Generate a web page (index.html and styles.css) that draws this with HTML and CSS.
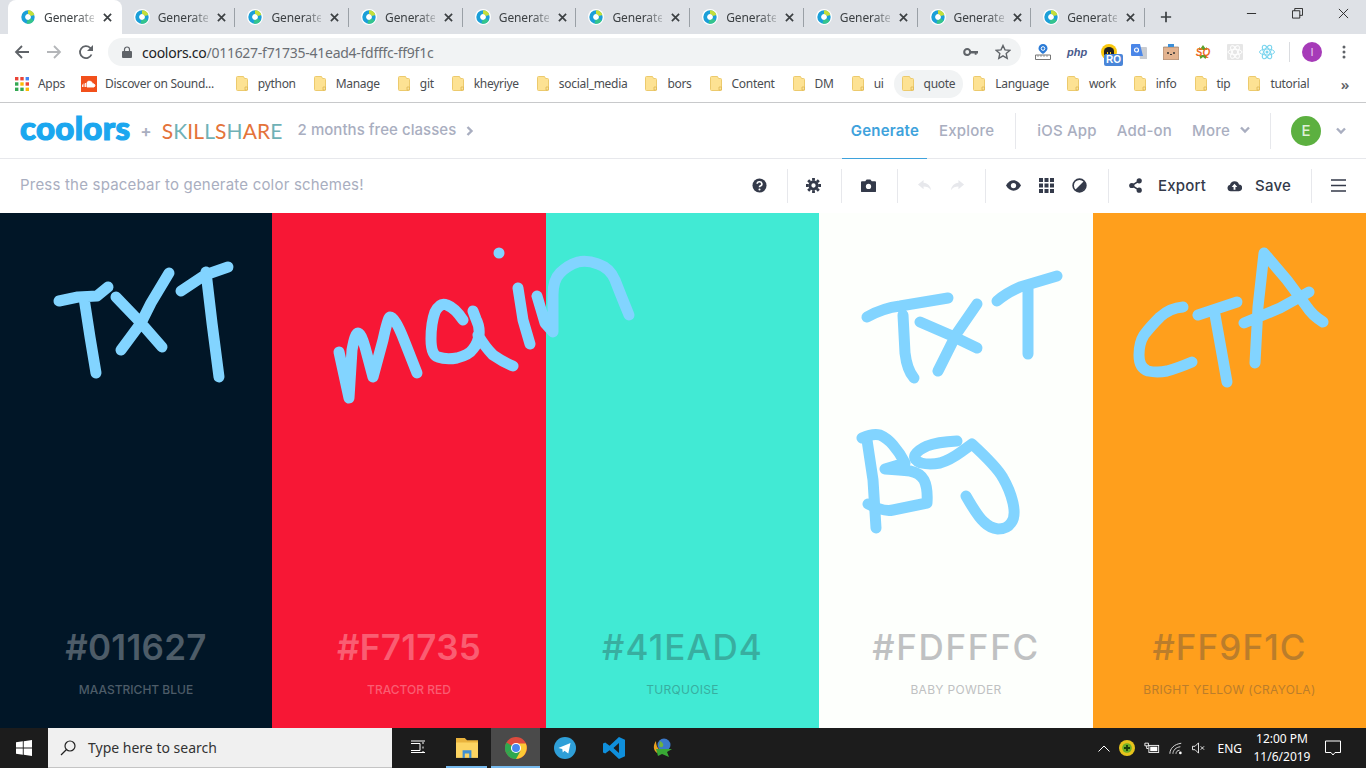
FILE: index.html
```html
<!DOCTYPE html>
<html lang="en">
<head>
  <meta charset="UTF-8" />
  <title>Coolors</title>
  <link rel="stylesheet" href="styles.css">
</head>
<body>
  <svg class="defs" width="0" height="0">
    <symbol id="fav" viewBox="0 0 16 16">
      <circle cx="8" cy="8" r="8" fill="#fff"/>
      <circle cx="8" cy="8" r="4.800" fill="none" stroke="#1b9fd8" stroke-width="3.800"/>
      <path d="M8 3.200a4.800 4.800 0 0 1 4.600 3.300" fill="none" stroke="#c4de3a" stroke-width="3.800"/>
      <path d="M12.200 10.500A4.800 4.800 0 0 1 7 12.700" fill="none" stroke="#35c48d" stroke-width="3.800"/>
    </symbol>
    <symbol id="x" viewBox="0 0 10 10">
      <path d="M1 1l8 8M9 1l-8 8" stroke="#3c4043" stroke-width="1.900" fill="none"/>
    </symbol>
    <symbol id="folder" viewBox="0 0 12 15">
      <path d="M.5 1.500a1 1 0 0 1 1-1h6l1 2h2a1 1 0 0 1 1 1v10a1 1 0 0 1-1 1h-9a1 1 0 0 1-1-1z" fill="#fde293" stroke="#ecca6d"/>
      <path d="M9 14v-3h2.500v3z" fill="#fbe39b" stroke="#e0b850" stroke-width=".8"/>
    </symbol>
    <symbol id="chev" viewBox="0 0 10 8">
      <path d="M1 1.500l4 4 4-4" fill="none" stroke="#a9aec0" stroke-width="2.400"/>
    </symbol>
  </svg>

  <div class="tabstrip">
    <div class="tab tab-active"><svg class="fav"><use href="#fav"/></svg><span class="tab-title">Generate</span><svg class="tab-x"><use href="#x"/></svg></div>
    <div class="tab"><svg class="fav"><use href="#fav"/></svg><span class="tab-title">Generate</span><svg class="tab-x"><use href="#x"/></svg></div>
    <div class="tab"><svg class="fav"><use href="#fav"/></svg><span class="tab-title">Generate</span><svg class="tab-x"><use href="#x"/></svg></div>
    <div class="tab"><svg class="fav"><use href="#fav"/></svg><span class="tab-title">Generate</span><svg class="tab-x"><use href="#x"/></svg></div>
    <div class="tab"><svg class="fav"><use href="#fav"/></svg><span class="tab-title">Generate</span><svg class="tab-x"><use href="#x"/></svg></div>
    <div class="tab"><svg class="fav"><use href="#fav"/></svg><span class="tab-title">Generate</span><svg class="tab-x"><use href="#x"/></svg></div>
    <div class="tab"><svg class="fav"><use href="#fav"/></svg><span class="tab-title">Generate</span><svg class="tab-x"><use href="#x"/></svg></div>
    <div class="tab"><svg class="fav"><use href="#fav"/></svg><span class="tab-title">Generate</span><svg class="tab-x"><use href="#x"/></svg></div>
    <div class="tab"><svg class="fav"><use href="#fav"/></svg><span class="tab-title">Generate</span><svg class="tab-x"><use href="#x"/></svg></div>
    <div class="tab"><svg class="fav"><use href="#fav"/></svg><span class="tab-title">Generate</span><svg class="tab-x"><use href="#x"/></svg></div>
    <svg class="newtab" viewBox="0 0 14 14"><path d="M7 1v12M1 7h12" stroke="#3c4043" stroke-width="2" fill="none"/></svg>
    <div class="winctrls">
      <div class="winbtn"><svg viewBox="0 0 12 12"><path d="M1 6h10" stroke="#222" fill="none"/></svg></div>
      <div class="winbtn"><svg viewBox="0 0 12 12"><path d="M.5 3h8v8h-8zM3 3V.5h8.500V8H8.500" stroke="#222" fill="none"/></svg></div>
      <div class="winbtn"><svg viewBox="0 0 12 12"><path d="M1 1l10 10M11 1L1 11" stroke="#222" fill="none"/></svg></div>
    </div>
  </div>

  <div class="urlbar">
    <div class="navbtns">
      <svg viewBox="0 0 16 16"><path d="M15 8H2M8 2L2 8l6 6" fill="none" stroke="#5f6368" stroke-width="1.800"/></svg>
      <svg viewBox="0 0 16 16"><path d="M1 8h13M8 2l6 6-6 6" fill="none" stroke="#b4b6b9" stroke-width="1.800"/></svg>
      <svg viewBox="0 0 16 16"><path d="M13.500 10.500A6 6 0 1 1 12.200 3.800L14 5.500" fill="none" stroke="#5f6368" stroke-width="1.800"/><path d="M15 1v6H9z" fill="#5f6368"/></svg>
    </div>
    <div class="omnibox">
      <svg class="lock" viewBox="0 0 10 12"><path d="M2.500 5V3.500a2.500 2.500 0 0 1 5 0V5" fill="none" stroke="#5f6368" stroke-width="1.200"/><rect y="5" width="10" height="7" rx="1" fill="#5f6368"/></svg>
      <span class="url"><b>coolors.co</b>/011627-f71735-41ead4-fdfffc-ff9f1c</span>
      <svg class="omni-key" viewBox="0 0 16 10"><circle cx="4.500" cy="5" r="3.200" fill="none" stroke="#5f6368" stroke-width="2.200"/><path d="M8 4h8v2.500h-1.500V8h-2V6.500H8z" fill="#5f6368"/></svg>
      <svg class="omni-star" viewBox="0 0 16 16"><path d="M8 1.500l2 4.400 4.800.5-3.600 3.200 1 4.700L8 11.900l-4.200 2.400 1-4.700L1.200 6.400 6 5.900z" fill="none" stroke="#5f6368" stroke-width="1.400"/></svg>
    </div>
    <div class="exts">
      <svg viewBox="0 0 16 16"><path d="M8 0a4.500 4.500 0 0 1 4.500 4.500C12.500 7 8 10 8 10S3.500 7 3.500 4.500A4.500 4.500 0 0 1 8 0z" fill="#2b7bd6"/><circle cx="8" cy="4.500" r="1.800" fill="none" stroke="#fff"/><path d="M.5 11h15v4.500H.5z" fill="#fff" stroke="#777"/><path d="M3 11v2M6 11v2M9 11v2M12 11v2" stroke="#777" stroke-width=".7"/></svg>
      <span class="ext-php">php</span>
      <div class="ext-ro">
        <svg viewBox="0 0 16 16"><circle cx="8" cy="8" r="8" fill="#f9c80e"/><path d="M3 11V7a5 4 0 0 1 10 0v4z" fill="#222"/><path d="M6 8h1v3H6zM9 8h1v3H9z" fill="#f9c80e"/></svg>
        <span class="ro-badge">RO</span>
      </div>
      <svg viewBox="0 0 16 16"><path d="M7 3h8a1 1 0 0 1 1 1v11H9z" fill="#c9ccd1"/><path d="M1 0h8l3 12H1a1 1 0 0 1-1-1V1a1 1 0 0 1 1-1z" fill="#4a86e8"/><circle cx="5.500" cy="6" r="2" fill="none" stroke="#fff" stroke-width="1.200"/></svg>
      <svg viewBox="0 0 16 16"><rect y="3" width="16" height="13" rx="1" fill="#e3b38f" stroke="#7a6a5c" stroke-width=".6"/><path d="M5 0h6v3H5z" fill="#3c8fd8"/><circle cx="5" cy="9" r="1" fill="#333"/><circle cx="11" cy="9" r="1" fill="#333"/><path d="M7 10h2v1H7z" fill="#333"/></svg>
      <svg viewBox="0 0 16 16"><path d="M4 3l1.500 1.500L8 1l2.500 3.500L12 3v3H4zM4 11h8l-1.500 4L8 13l-2.500 2z" fill="#5aa02c"/><text x="8" y="12" class="sq-text">SQ</text></svg>
      <svg viewBox="0 0 16 16"><rect width="16" height="16" rx="1" fill="#e6e6e6"/><g fill="none" stroke="#fff"><ellipse cx="8" cy="8" rx="7" ry="2.700"/><ellipse cx="8" cy="8" rx="7" ry="2.700" transform="rotate(60 8 8)"/><ellipse cx="8" cy="8" rx="7" ry="2.700" transform="rotate(120 8 8)"/></g></svg>
      <svg viewBox="0 0 16 16"><g fill="none" stroke="#7cd5ee"><ellipse cx="8" cy="8" rx="7.500" ry="3"/><ellipse cx="8" cy="8" rx="7.500" ry="3" transform="rotate(60 8 8)"/><ellipse cx="8" cy="8" rx="7.500" ry="3" transform="rotate(120 8 8)"/></g><circle cx="8" cy="8" r="1.500" fill="#7cd5ee"/></svg>
    </div>
    <div class="profile">
      <span class="profile-pic">I</span>
      <svg class="kebab" viewBox="0 0 4 14"><circle cx="2" cy="2" r="1.500" fill="#5f6368"/><circle cx="2" cy="7" r="1.500" fill="#5f6368"/><circle cx="2" cy="12" r="1.500" fill="#5f6368"/></svg>
    </div>
  </div>

  <div class="bookmarks">
    <div class="bm bm-apps">
      <svg class="apps-ico" viewBox="0 0 14 14">
        <g fill="#ea4335"><rect width="3.400" height="3.400"/><rect x="5.300" width="3.400" height="3.400"/></g><rect x="10.600" width="3.400" height="3.400" fill="#4285f4"/>
        <rect y="5.300" width="3.400" height="3.400" fill="#34a853"/><rect x="5.300" y="5.300" width="3.400" height="3.400" fill="#fbbc05"/><rect x="10.600" y="5.300" width="3.400" height="3.400" fill="#ea4335"/>
        <rect y="10.600" width="3.400" height="3.400" fill="#34a853"/><rect x="5.300" y="10.600" width="3.400" height="3.400" fill="#34a853"/><rect x="10.600" y="10.600" width="3.400" height="3.400" fill="#fbbc05"/>
      </svg>Apps
    </div>
    <div class="bm bm-sc">
      <svg class="sc-ico" viewBox="0 0 16 16"><rect width="16" height="16" fill="#f2501b"/><path d="M6 11V6.500A3 3 0 0 1 11.500 8 1.600 1.600 0 1 1 13 11zM1.500 11V8.500M3 11V7.500M4.500 11V7" stroke="#fff" stroke-width=".9" fill="#fff"/></svg>Discover on Sound...
    </div>
    <div class="bm"><svg class="folder"><use href="#folder"/></svg>python</div>
    <div class="bm"><svg class="folder"><use href="#folder"/></svg>Manage</div>
    <div class="bm"><svg class="folder"><use href="#folder"/></svg>git</div>
    <div class="bm"><svg class="folder"><use href="#folder"/></svg>kheyriye</div>
    <div class="bm"><svg class="folder"><use href="#folder"/></svg>social_media</div>
    <div class="bm"><svg class="folder"><use href="#folder"/></svg>bors</div>
    <div class="bm"><svg class="folder"><use href="#folder"/></svg>Content</div>
    <div class="bm"><svg class="folder"><use href="#folder"/></svg>DM</div>
    <div class="bm"><svg class="folder"><use href="#folder"/></svg>ui</div>
    <div class="bm bm-hover"><svg class="folder"><use href="#folder"/></svg>quote</div>
    <div class="bm"><svg class="folder"><use href="#folder"/></svg>Language</div>
    <div class="bm"><svg class="folder"><use href="#folder"/></svg>work</div>
    <div class="bm"><svg class="folder"><use href="#folder"/></svg>info</div>
    <div class="bm"><svg class="folder"><use href="#folder"/></svg>tip</div>
    <div class="bm"><svg class="folder"><use href="#folder"/></svg>tutorial</div>
    <span class="bm-more">»</span>
  </div>

  <header class="sitenav">
    <span class="logo">coolors</span>
    <span class="logo-plus">+</span>
    <span class="skillshare"><i class="or">S</i><i class="te">K</i><i class="or">I</i><i class="or">L</i><i class="te">L</i><i class="or">S</i><i class="te">H</i><i class="or">A</i><i class="or">R</i><i class="te">E</i></span>
    <span class="promo">2 months free classes</span>
    <svg class="promo-arrow" viewBox="0 0 8 10"><path d="M1.500 1l4 4-4 4" fill="none" stroke="#a9aec0" stroke-width="2.400"/></svg>
    <nav class="links">
      <a class="link link-active">Generate</a>
      <a class="link">Explore</a>
      <span class="navsep"></span>
      <a class="link">iOS App</a>
      <a class="link">Add-on</a>
      <a class="link">More<svg class="chev"><use href="#chev"/></svg></a>
      <span class="navsep navsep-b"></span>
      <span class="avatar">E</span>
      <svg class="chev chev-user"><use href="#chev"/></svg>
    </nav>
  </header>

  <div class="toolbar">
    <span class="hint">Press the spacebar to generate color schemes!</span>
    <div class="tools">
      <div class="tg tg-help">
        <svg class="ti" viewBox="0 0 16 16"><circle cx="8" cy="8" r="7.500" fill="#343a4a"/><path d="M5.500 6.200A2.500 2.300 0 1 1 8.800 8.500c-.7.300-.8.700-.8 1.300" fill="none" stroke="#fff" stroke-width="1.800"/><circle cx="8" cy="12.200" r="1.100" fill="#fff"/></svg>
      </div>
      <div class="tg tg-gear">
        <svg class="ti" viewBox="0 0 16 16"><circle cx="8" cy="8" r="3.800" fill="none" stroke="#343a4a" stroke-width="3"/><path d="M6.500 0h3v3h-3zM6.500 13h3v3h-3zM0 6.500h3v3H0zM13 6.500h3v3h-3z" fill="#343a4a"/><path d="M6.500 0h3v3h-3zM6.500 13h3v3h-3zM0 6.500h3v3H0zM13 6.500h3v3h-3z" fill="#343a4a" transform="rotate(45 8 8)"/></svg>
      </div>
      <div class="tg tg-cam">
        <svg class="ti" viewBox="0 0 16 16"><path d="M1 3.500h3.500L6 1.500h4l1.500 2H15a1 1 0 0 1 1 1V14a1 1 0 0 1-1 1H1a1 1 0 0 1-1-1V4.500a1 1 0 0 1 1-1z" fill="#343a4a"/><circle cx="8" cy="9" r="2.800" fill="#fff"/></svg>
      </div>
      <div class="tg tg-hist">
        <svg class="ti" viewBox="0 0 16 14"><path d="M7 1L1 6l6 5V8c3.500 0 6 1 8 4-.5-4.500-3.500-7.500-8-8z" fill="#e7e8ec"/></svg>
        <svg class="ti" viewBox="0 0 16 14"><path d="M9 1l6 5-6 5V8c-3.500 0-6 1-8 4 .5-4.500 3.500-7.500 8-8z" fill="#e7e8ec"/></svg>
      </div>
      <div class="tg tg-view">
        <svg class="ti" viewBox="0 0 16 12"><path d="M0 6c2-3.500 5-5.500 8-5.500S14 2.500 16 6c-2 3.500-5 5.500-8 5.500S2 9.500 0 6z" fill="#343a4a"/><circle cx="8" cy="6" r="2.800" fill="#fff"/></svg>
        <svg class="ti" viewBox="0 0 15 15"><g fill="#343a4a"><rect width="4" height="4"/><rect x="5.500" width="4" height="4"/><rect x="11" width="4" height="4"/><rect y="5.500" width="4" height="4"/><rect x="5.500" y="5.500" width="4" height="4"/><rect x="11" y="5.500" width="4" height="4"/><rect y="11" width="4" height="4"/><rect x="5.500" y="11" width="4" height="4"/><rect x="11" y="11" width="4" height="4"/></g></svg>
        <svg class="ti" viewBox="0 0 16 16"><circle cx="8" cy="8" r="6.800" fill="#fff" stroke="#343a4a" stroke-width="1.800"/><path d="M12.800 3.200A6.800 6.800 0 0 1 3.200 12.800z" fill="#343a4a"/></svg>
      </div>
      <div class="tg tg-act">
        <svg class="ti ti-share" viewBox="0 0 14 16"><circle cx="3" cy="8" r="2.800" fill="#343a4a"/><circle cx="11" cy="3" r="2.800" fill="#343a4a"/><circle cx="11" cy="13" r="2.800" fill="#343a4a"/><path d="M3 8l8-5M3 8l8 5" stroke="#343a4a" stroke-width="1.600"/></svg>
        <span class="act-label">Export</span>
        <svg class="ti ti-cloud" viewBox="0 0 16 13"><path d="M4 12.500a3.500 3.500 0 0 1-.8-6.900A5 5 0 0 1 12.800 5.500 3.500 3.500 0 0 1 12.500 12.500z" fill="#343a4a"/><path d="M8 4.500L5 8h2v3h2V8h2z" fill="#fff"/></svg>
        <span class="act-label">Save</span>
      </div>
      <div class="tg tg-menu">
        <svg class="ti ti-burger" viewBox="0 0 15 13"><path d="M0 1h15M0 6.500h15M0 12h15" stroke="#343a4a" stroke-width="1.500"/></svg>
      </div>
    </div>
  </div>

  <main class="palette">
    <div class="swatch sw-dark"><div class="hex">#011627</div><div class="cname">Maastricht Blue</div></div>
    <div class="swatch sw-red"><div class="hex">#F71735</div><div class="cname">Tractor Red</div></div>
    <div class="swatch sw-teal"><div class="hex">#41EAD4</div><div class="cname">Turquoise</div></div>
    <div class="swatch sw-white"><div class="hex">#FDFFFC</div><div class="cname">Baby Powder</div></div>
    <div class="swatch sw-orange"><div class="hex">#FF9F1C</div><div class="cname">Bright Yellow (Crayola)</div></div>

    <!-- hand drawn notes on top of the colours, coordinates are page pixels -->
    <svg class="scribbles" viewBox="0 213 1366 515">
      <!-- TXT -->
      <path d="M59 301L78 297L97 296L108 287M84 298L90 337L96 373"/>
      <path d="M116 297L141 323L162 347M169 273L151 303L141 323L121 350"/>
      <path d="M181 291L205 275L228 267M206 272L212 323L219 377"/>
      <!-- main -->
      <path d="M339 352L349 398L352 350Q355 333 358 333Q361 333 365 347L373 377L383 340Q388 317 390 317Q395 317 404 340L417 373"/>
      <path d="M463 320Q455 308 447 305Q440 302 435 312Q431 323 431 339Q431 355 438 357Q446 360 457 358Q469 355 473 349Q478 343 479 335Q480 327 476 319L473 311M478 335Q485 347 493 355Q503 362 513 366"/>
      <path d="M499 253v.1M518 288L523 320L530 344"/>
      <path d="M537 296L545 323L553 332L553 295Q553 280 560 273Q568 265 578 262Q587 260 598 264Q610 268 615 280Q620 293 629 315"/>
      <!-- TXT -->
      <path d="M867 317Q883 308 900 306L948 298M903 315L905 353Q907 370 914 378"/>
      <path d="M920 322L950 335L977 348M977 304L957 333L938 371"/>
      <path d="M997 301Q1006 293 1020 287L1057 276M1028 287L1028 354"/>
      <!-- BG -->
      <path d="M867 440L873 480L876 528"/>
      <path d="M862 438Q873 433 880 435Q887 438 893 445Q900 453 905 463L885 469Q900 470 910 471Q920 473 924 480Q928 488 927 503Q903 508 893 510Q883 512 868 504"/>
      <path d="M957 441Q937 442 927 446Q918 450 915 455Q913 460 921 463Q930 465 940 463Q950 460 961 452L972 444Q997 467 1003 478Q1010 490 1013 503Q1016 517 1011 523Q1007 529 998 529Q990 528 984 522Q978 517 966 496"/>
      <!-- CTA -->
      <path d="M1183 307Q1170 308 1160 317Q1150 327 1144 335Q1139 343 1139 355Q1139 368 1148 371Q1157 373 1167 371Q1178 368 1192 362"/>
      <path d="M1198 315L1237 302M1215 315L1227 382"/>
      <path d="M1255 363L1258 307L1264 253L1287 280L1307 307Q1312 315 1323 322M1244 323L1280 308L1309 292"/>
    </svg>
  </main>

  <footer class="taskbar">
    <svg class="tb-win" viewBox="0 0 16 16"><path d="M0 2.300l6.800-1v6.300H0zM7.700 1.200L16 0v7.600H7.700zM0 8.500h6.800v6.200l-6.800-1zM7.700 8.500H16V16l-8.300-1.200z" fill="#fff"/></svg>
    <div class="tb-search">
      <svg viewBox="0 0 16 16"><circle cx="10" cy="6" r="5" fill="none" stroke="#222" stroke-width="1.200"/><path d="M6.500 9.500L1 15" stroke="#222" stroke-width="1.300"/></svg>
      <span>Type here to search</span>
    </div>
    <div class="tb-apps">
      <div class="tb-app"><svg viewBox="0 0 16 16"><path d="M1 1h14M1 12.500h14M1 3.500h9v7H1M13 2v2M13 6.500v2M13 11v2" fill="none" stroke="#fff"/></svg></div>
      <div class="tb-app tb-open"><svg class="big" viewBox="0 0 20 20"><path d="M0 1h8l2 2h10v4H0z" fill="#e9b33d"/><path d="M0 5h20v14H0z" fill="#fcd462"/><path d="M6 12h8v7h-2v-4H8v4H6z" fill="#3f8fd2"/></svg></div>
      <div class="tb-app tb-cur"><svg class="big" viewBox="0 0 20 20"><circle cx="10" cy="10" r="10" fill="#dd4b3e"/><path d="M10 10L1.300 15A10 10 0 0 1 1.300 5z" fill="#2fa84f"/><path d="M1.300 15A10 10 0 0 0 11 20L15 10H10z" fill="#2fa84f"/><path d="M10 6h8.900A10 10 0 0 1 10 20l4-7z" fill="#fcc934"/><circle cx="10" cy="10" r="4.600" fill="#fff"/><circle cx="10" cy="10" r="3.600" fill="#4688f1"/></svg></div>
      <div class="tb-app"><svg class="big" viewBox="0 0 20 20"><circle cx="10" cy="10" r="10" fill="#2f9fd8"/><path d="M4 10l11-4.500L13 15l-3.500-2.500L8 14l-.5-3z" fill="#fff"/></svg></div>
      <div class="tb-app"><svg class="big" viewBox="0 0 20 20"><path d="M14.500 0L20 2.500v15L14.500 20 6 12 2 15 0 14V6l2-1 4 3zM14.500 5.500L9.500 10l5 4.500z" fill="#0f8fdc"/></svg></div>
      <div class="tb-app"><svg class="big" viewBox="0 0 22 20"><circle cx="12" cy="7" r="6.500" fill="#3b79c9"/><path d="M8 3c2 1 4 3 3 5s-3 1-4 0z" fill="#6fb33d"/><path d="M4 3C1 7 1 12 5 15l3-3C5 10 4 7 4 3z" fill="#e8a220"/><path d="M4 11l16 0-5 3 2 5-7-3-4 2z" fill="#39a935"/></svg></div>
    </div>
    <div class="tray">
      <svg class="tr-up" viewBox="0 0 12 7"><path d="M.500 6.500L6 1l5.500 5.500" fill="none" stroke="#fff"/></svg>
      <svg class="tr-green" viewBox="0 0 16 16"><circle cx="8" cy="8" r="8" fill="#e5c31c"/><circle cx="8" cy="8" r="4.800" fill="#6cae27"/><path d="M8 5v6M5 8h6" stroke="#173c0a" stroke-width="1.800"/></svg>
      <svg class="tr-batt" viewBox="0 0 18 14"><path d="M1 1h4v3H1zM3 4v3h2" fill="none" stroke="#fff"/><rect x="5.500" y="3.500" width="11" height="8" fill="none" stroke="#fff"/><rect x="7" y="5" width="8" height="5" fill="#fff"/></svg>
      <svg class="tr-wifi" viewBox="0 0 16 14"><path d="M1 13C1 7 6 2 14 1M4.500 13C4.500 9 8 5.500 13 5M8 13c0-2 1.500-4 4-4" fill="none" stroke="#ddd" stroke-width="1.100"/><circle cx="13" cy="12" r="1.500" fill="#fff"/></svg>
      <svg class="tr-vol" viewBox="0 0 16 14"><path d="M1 5h3l4-4v12l-4-4H1zM10.500 5l4 4M14.500 5l-4 4" fill="none" stroke="#fff"/></svg>
      <span class="tr-lang">ENG</span>
      <div class="tr-clock"><span>12:00 PM</span><span>11/6/2019</span></div>
      <svg class="tr-note" viewBox="0 0 16 16"><path d="M.500 1h15v11.500H10L8 15l-2-2.500H.500z" fill="none" stroke="#fff"/></svg>
    </div>
  </footer>
</body>
</html>
```

FILE: styles.css
```css
:root {
  --strip: #dee1e6;
  --chrome-text: #3c4043;
  --muted: #a9aec0;
  --dark-icon: #343a4a;
  --line: #e7e8ec;
  --scribble: #82d4ff;
}
* { box-sizing: border-box; }
html, body { height: 100%; }
body {
  margin: 0;
  width: 1366px;
  height: 768px;
  overflow: hidden;
  display: flex;
  flex-direction: column;
  font-family: "Noto Sans", sans-serif;
  background: #fff;
}
.defs { position: absolute; }

/* browser tabs */
.tabstrip {
  height: 34px;
  flex: none;
  display: flex;
  align-items: stretch;
  padding-left: 8px;
  background: var(--strip);
}
.tab {
  width: 113.7px;
  display: flex;
  align-items: center;
  padding-left: 12px;
  position: relative;
  font-size: 12px;
  color: var(--chrome-text);
}
.tab::after {
  content: "";
  position: absolute;
  right: 0;
  top: 8px;
  height: 19px;
  border-right: 1px solid #9aa0a6;
}
.tab-active { background: #fff; border-radius: 8px 8px 0 0; }
.tab-active::after { display: none; }
.fav { width: 16px; height: 16px; flex: none; }
.tab-title {
  width: 50px;
  margin-left: 8px;
  white-space: nowrap;
  letter-spacing: -.1px;
  -webkit-mask-image: linear-gradient(90deg, #000 65%, rgba(0,0,0,.25));
  mask-image: linear-gradient(90deg, #000 65%, rgba(0,0,0,.25));
}
.tab-x { width: 9px; height: 9px; margin-left: 9px; flex: none; }
.newtab { width: 12px; height: 12px; align-self: center; margin-left: 15px; }
.winctrls { margin-left: auto; display: flex; }
.winbtn { width: 46px; display: flex; justify-content: center; padding-top: 8px; }
.winbtn svg { width: 11px; height: 11px; }

/* address bar */
.urlbar {
  height: 34px;
  flex: none;
  display: flex;
  align-items: center;
  padding: 2px 0 0 14px;
}
.navbtns { display: flex; gap: 16px; }
.navbtns svg { width: 16px; height: 16px; }
.omnibox {
  width: 913px;
  height: 28px;
  margin-left: 14px;
  border-radius: 14px;
  background: #f1f3f4;
  display: flex;
  align-items: center;
  padding-left: 14px;
}
.lock { width: 10px; height: 12px; flex: none; }
.url { margin-left: 10px; font-size: 14px; color: #6b6f74; letter-spacing: -.27px; }
.url b { font-weight: 400; color: #202124; }
.omni-key { width: 15px; height: 10px; margin-left: auto; }
.omni-star { width: 16px; height: 16px; margin: 0 10px 0 17px; }
.exts { display: flex; align-items: center; margin-left: 14px; width: 254px; }
.exts > svg, .exts > div { width: 16px; flex: none; margin-right: 16px; }
.exts > svg { height: 16px; }
.exts .ext-php { font: italic 700 11px "Liberation Sans", sans-serif; color: #4a5a8c; width: 18px; margin-right: 16px; flex: none; }
.exts .ext-ro { position: relative; height: 16px; margin-right: 14px; }
.ext-ro svg { width: 16px; height: 16px; display: block; }
.ro-badge {
  position: absolute;
  left: 3px;
  top: 10px;
  padding: 0 2px;
  border-radius: 2px;
  background: #4a86d8;
  color: #fff;
  font: 700 10px/12px "Liberation Sans", sans-serif;
}
.sq-text { font: italic 700 10px "Liberation Sans", sans-serif; fill: #ee6a1f; text-anchor: middle; }
.profile {
  flex: 1;
  display: flex;
  align-items: center;
  justify-content: space-between;
  height: 20px;
  padding: 0 20px 0 12px;
  border-left: 1px solid #dadce0;
}
.profile-pic {
  width: 20px;
  height: 20px;
  border-radius: 50%;
  background: #a63bb8;
  color: #e8cdf0;
  font: 11px/20px "Liberation Sans", sans-serif;
  text-align: center;
}
.kebab { width: 4px; height: 14px; }

/* bookmarks */
.bookmarks {
  height: 35px;
  flex: none;
  display: flex;
  align-items: center;
  padding: 0 0 3px 7px;
  gap: 2px;
  border-bottom: 1px solid #c8c9cb;
  font-size: 12px;
  letter-spacing: -.3px;
  color: #4a4d51;
}
.bm {
  height: 28px;
  display: flex;
  align-items: center;
  padding: 0 8px;
  border-radius: 14px;
  white-space: nowrap;
}
.bm-hover { background: #f1f3f4; }
.folder { width: 12px; height: 15px; margin-right: 10px; flex: none; }
.apps-ico { width: 14px; height: 14px; margin-right: 9px; }
.sc-ico { width: 16px; height: 16px; margin-right: 8px; }
.bm-sc { margin: 0 4px 0 -2px; }
.bm-more { margin-left: auto; margin-right: 17px; font-size: 15px; font-weight: 600; color: #5f6368; }

/* coolors nav */
.sitenav {
  height: 56px;
  flex: none;
  display: flex;
  align-items: center;
  padding-left: 20px;
  border-bottom: 1px solid var(--line);
  font-family: Inter, sans-serif;
}
.logo {
  font: 900 33px/1 Lato, sans-serif;
  color: #1ba7ef;
  letter-spacing: .3px;
  margin-top: -6px;
  -webkit-text-stroke: 1.2px #1ba7ef;
}
.logo-plus { margin-left: 10px; font-size: 17px; font-weight: 600; color: var(--muted); }
.skillshare { margin-left: 10px; font: 400 21px/1 Lato, sans-serif; letter-spacing: .1px; }
.skillshare i { font-style: normal; }
.or { color: #e4733a; }
.te { color: #6fb1b6; }
.promo { margin-left: 15px; font-size: 15px; font-weight: 500; letter-spacing: .05px; color: var(--muted); margin-top: -2px; }
.promo-arrow { width: 8px; height: 10px; margin-left: 10px; }
.links { margin-left: auto; align-self: stretch; display: flex; align-items: center; font-size: 15px; font-weight: 500; letter-spacing: .2px; color: var(--muted); }
.link { display: flex; align-items: center; height: 100%; padding: 0 10px 1px; }
.link-active {
  color: #3ea2dc;
  font-weight: 600;
  padding: 0 8px 0 9px;
  margin-right: 2px;
  margin-bottom: -1px;
  height: calc(100% + 1px);
  border-bottom: 1px solid #3ea2dc;
}
.navsep { height: 36px; border-left: 1px solid var(--line); margin: 0 11px; }
.navsep-b { margin: 0 20px 0 10px; }
.chev { width: 10px; height: 8px; margin-left: 10px; }
.chev-user { margin: 0 20px 0 15px; }
.avatar {
  width: 30px;
  height: 30px;
  border-radius: 50%;
  background: #5cb040;
  color: #dff0d8;
  font-size: 15px;
  line-height: 30px;
  text-align: center;
}

/* generator toolbar */
.toolbar {
  height: 54px;
  flex: none;
  display: flex;
  align-items: center;
  padding: 0 0 1px 20px;
  font-family: Inter, sans-serif;
}
.hint { font-size: 15px; letter-spacing: .2px; color: var(--muted); margin-top: -2px; }
.tools { margin-left: auto; display: flex; height: 34px; }
.tg { display: flex; align-items: center; justify-content: center; padding-right: 2px; border-right: 1px solid var(--line); }
.tg-help { width: 55px; }
.tg-gear { width: 54px; }
.tg-cam { width: 56px; }
.tg-hist { width: 88px; gap: 18px; }
.tg-view { width: 123px; gap: 18px; }
.tg-act { width: 203px; justify-content: flex-start; padding: 0 0 0 20px; }
.tg-menu { width: 54px; border-right: 0; }
.ti { width: 15px; height: 15px; flex: none; }
.act-label { font-size: 15px; font-weight: 500; letter-spacing: .2px; color: var(--dark-icon); }
.ti-share { width: 13px; margin-right: 16px; }
.ti-cloud { margin: 0 13px 0 21px; }
.ti-burger { height: 13px; }

/* colour columns */
.palette {
  flex: 1;
  position: relative;
  display: grid;
  grid-template-columns: 272px 274px 273px 274px 273px;
}
.swatch {
  display: flex;
  flex-direction: column;
  justify-content: flex-end;
  align-items: center;
  padding-bottom: 31px;
  font-family: Inter, sans-serif;
}
.hex { font-size: 35px; font-weight: 600; line-height: 44px; letter-spacing: .3px; }
.cname { margin-top: 13px; font-size: 12px; line-height: 15px; font-weight: 500; text-transform: uppercase; }
.sw-dark { background: #011627; color: #4d5c68; }
.sw-red { background: #f71735; color: #fa5d72; }
.sw-teal { background: #41ead4; color: #38aea0; }
.sw-white { background: #fdfffc; color: #bfc1c2; }
.sw-orange { background: #ff9f1c; color: #bb7d2b; }
.sw-teal .hex { letter-spacing: 1.1px; font-weight: 500; }
.sw-white .hex { letter-spacing: 1.7px; font-weight: 500; }
.sw-orange .hex { letter-spacing: 1.1px; font-weight: 500; }
.sw-white .cname, .sw-orange .cname, .sw-teal .cname { font-weight: 400; letter-spacing: .3px; }
.scribbles {
  position: absolute;
  left: 0;
  top: 0;
  width: 100%;
  height: 100%;
  pointer-events: none;
}
.scribbles path {
  fill: none;
  stroke: var(--scribble);
  stroke-width: 11;
  stroke-linecap: round;
  stroke-linejoin: round;
}

/* windows taskbar */
.taskbar {
  height: 40px;
  flex: none;
  display: flex;
  align-items: center;
  background: #1c1c1c;
  color: #fff;
}
.tb-win { width: 16px; height: 16px; margin: 0 16px; flex: none; }
.tb-search {
  width: 344px;
  height: 40px;
  display: flex;
  align-items: center;
  padding-left: 12px;
  background: #f0f0f0;
  border-bottom: 1px solid #c4c4c4;
  color: #333;
  font-size: 14px;
}
.tb-search svg { width: 16px; height: 16px; margin-right: 12px; flex: none; }
.tb-apps { display: flex; height: 40px; margin-left: 1px; }
.tb-app { width: 49px; display: flex; align-items: center; justify-content: center; }
.tb-app svg { width: 16px; height: 16px; }
.tb-app .big { width: 22px; height: 22px; }
.tb-open { background: linear-gradient(#76b9ed, #76b9ed) center bottom / 41px 2px no-repeat; }
.tb-cur { background: #4a4a4a; box-shadow: inset 0 -2px 0 #76b9ed; }
.tray { margin-left: auto; display: flex; align-items: center; height: 40px; }
.tr-up { width: 12px; height: 7px; margin-right: 9px; }
.tr-green { width: 16px; height: 16px; margin-right: 9px; }
.tr-batt { width: 16px; height: 13px; margin-right: 9px; }
.tr-wifi { width: 14px; height: 13px; margin-right: 8px; }
.tr-vol { width: 15px; height: 12px; margin-right: 11px; }
.tr-lang { font-size: 12px; margin-right: 10px; }
.tr-clock { width: 60px; display: flex; flex-direction: column; align-items: center; font-size: 12px; line-height: 18px; }
.tr-note { width: 16px; height: 16px; margin: 0 25px 0 13px; }
```
